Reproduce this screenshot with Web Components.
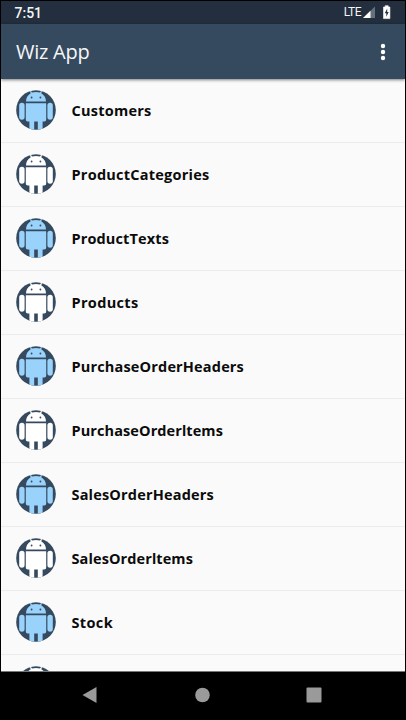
<!DOCTYPE html>
<html lang="en">
<head>
<meta charset="utf-8">
<title>Wiz App</title>
<style>
html, body { margin: 0; height: 100%; background: #000; }
.stem { font-family: Roboto, sans-serif; }
</style>
</head>
<body>
<wiz-phone>
  <status-bar slot="status" time="7:51" network="LTE"></status-bar>
  <app-bar slot="bar">Wiz App</app-bar>
  <entity-list>
    <entity-row tone="blue" span="80">Customers</entity-row>
    <entity-row span="138">ProductCategories</entity-row>
    <entity-row tone="blue" span="97.5">ProductTexts</entity-row>
    <entity-row span="67">Products</entity-row>
    <entity-row tone="blue" span="172.5">PurchaseOrderHeaders</entity-row>
    <entity-row span="151.5">PurchaseOrder<span class="stem">I</span>tems</entity-row>
    <entity-row tone="blue" span="142.5">SalesOrderHeaders</entity-row>
    <entity-row span="121.5">SalesOrder<span class="stem">I</span>tems</entity-row>
    <entity-row tone="blue" span="41.5">Stock</entity-row>
    <entity-row></entity-row>
  </entity-list>
  <nav-bar slot="nav"></nav-bar>
</wiz-phone>
<script>
const define = (name, html, connected) => {
  const template = document.createElement('template');
  template.innerHTML = html;
  customElements.define(name, class extends HTMLElement {
    constructor() {
      super();
      this.attachShadow({ mode: 'open' }).append(template.content.cloneNode(true));
    }
    connectedCallback() { if (connected) connected(this, this.shadowRoot); }
  });
};

define('wiz-phone', `
<style>
:host { display: flex; flex-direction: column; box-sizing: border-box; width: 406px; height: 720px;
  border: 1px solid #000; border-bottom: 0; background: #000; overflow: hidden; }
main { flex: 1; min-height: 0; overflow: hidden; background: #fafafa; border-bottom: 1px solid #777; }
</style>
<slot name="status"></slot><slot name="bar"></slot><main><slot></slot></main><slot name="nav"></slot>`);

define('status-bar', `
<style>
:host { display: flex; align-items: center; height: 23px; flex: none; padding: 0 13px 0 13.500px;
  background: #232f3e; color: #f4f5f6; font-family: Roboto, sans-serif; }
time { font-size: 14px; font-weight: 500; line-height: 23px; flex: 1; padding-top: 1px; }
span { font-size: 12px; line-height: 23px; letter-spacing: -.5px; margin-right: 2px; }
svg { display: block; }
</style>
<time></time><span></span>
<svg width="29" height="23" viewBox="1 0 29 23">
  <path d="M1 17 13 5.500V17Z" fill="#66707b"/><path d="M1 17 8.500 9.800V17Z" fill="#fff"/>
  <path d="M21.500 6h1.700v-1.300h3v1.300h1.700v11.600h-6.400Z" fill="#fff" stroke="#fff" stroke-width=".6"/>
  <path d="M25.200 7.500 22.800 12.200h1.500V15.700l2.400-4.600h-1.500Z" fill="#232f3e"/>
</svg>`, (host, root) => {
  root.querySelector('time').textContent = host.getAttribute('time');
  root.querySelector('span').textContent = host.getAttribute('network');
});

define('app-bar', `
<style>
:host { display: flex; align-items: center; justify-content: space-between; height: 55px; flex: none;
  box-sizing: border-box; padding: 0 18px 0 15px; background: #354a5f; color: #f5f6f7; position: relative;
  font: 400 20px "Open Sans", sans-serif; letter-spacing: -.25px; box-shadow: 0 1px 3px rgba(0,0,0,.5); }
span { padding-bottom: 1px; }
svg { display: block; }
</style>
<span><slot></slot></span>
<svg width="8" height="20" viewBox="0 0 8 20" fill="#fff"><circle cx="4" cy="4" r="2.200"/><circle cx="4" cy="10" r="2.200"/><circle cx="4" cy="16" r="2.200"/></svg>`);

define('entity-list', `
<style>:host { display: flex; flex-direction: column; }</style><slot></slot>`);

define('robot-avatar', `
<style>
:host { display: block; width: 40px; height: 40px; color: #fff; }
:host([tone="blue"]) { color: #99d2fb; }
svg { display: block; }
</style>
<svg width="40" height="40" viewBox="0 0 40 40">
  <defs><clipPath id="disc"><circle cx="20" cy="20" r="19.800"/></clipPath></defs>
  <circle cx="20" cy="20" r="19.800" fill="#354a5f"/>
  <g clip-path="url(#disc)" fill="currentColor">
    <path d="M10 11.600C10 7.500 12 4.800 14.800 3.200L13.300.3 14.300 0 16 2.600Q20 1.300 24 2.600L25.700 0 26.700.3 25.200 3.200C28 4.800 30 7.500 30 11.600Z"/>
    <path d="M9.800 13.300H30.200V29.500Q30.200 31.600 28.200 31.600H26.600V40H21.800V31.600H18.200V40H13.400V31.600H11.800Q9.800 31.600 9.800 29.500Z"/>
    <rect x="3.200" y="12.800" width="5.400" height="17" rx="2.700"/><rect x="31.400" y="12.800" width="5.400" height="17" rx="2.700"/>
  </g>
  <g fill="#354a5f"><circle cx="15.600" cy="7.500" r=".9"/><circle cx="24.400" cy="7.500" r=".9"/></g>
</svg>`);

define('entity-row', `
<style>
:host { display: flex; align-items: center; gap: 15.500px; height: 64px; flex: none; box-sizing: border-box;
  padding: 0 0 2px 15px; border-bottom: 1px solid #ececec; color: #0b0b0b;
  font: 700 14.500px "Open Sans", sans-serif; }
span { white-space: nowrap; padding-top: 2px; }
</style>
<robot-avatar></robot-avatar><span><slot></slot></span>`, (host, root) => {
  if (host.hasAttribute('tone')) root.querySelector('robot-avatar').setAttribute('tone', host.getAttribute('tone'));
  // Track each label so that it fills its span.
  const label = root.querySelector('span');
  const span = parseFloat(host.getAttribute('span'));
  if (span) {
    const spacing = (span - label.getBoundingClientRect().width) / host.textContent.length;
    host.style.letterSpacing = spacing + 'px';
  }
});

define('nav-bar', `
<style>
:host { display: flex; align-items: center; justify-content: center; height: 48px; flex: none; background: #000; }
svg { display: block; }
</style>
<svg width="404" height="48" viewBox="0 0 404 48" fill="#9a9a9a">
  <path d="M81.500 23 95.500 15V31Z"/><circle cx="201.500" cy="23" r="7.300"/><rect x="305.500" y="15.500" width="15" height="15" rx="1"/>
</svg>`);
</script>
</body>
</html>
